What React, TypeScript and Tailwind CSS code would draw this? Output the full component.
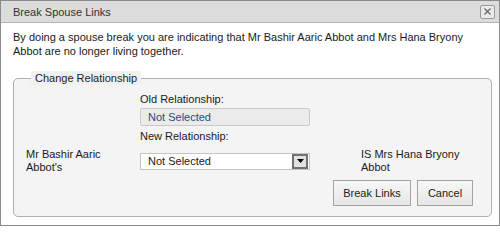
import React from "react";

export default function App() {
  const font = { fontFamily: '"Liberation Sans", Arial, sans-serif' };
  return (
    <div
      className="w-[500px] h-[226px] border border-[#8a8a8a] bg-white text-[11px] leading-[14px] text-[#1a1a1a] flex flex-col"
      style={font}
    >
      <div className="h-[22px] shrink-0 bg-[#dcdcdc] border-b border-[#b4b4b4] flex items-center justify-between pl-[12px] pr-[4px]">
        <span className="text-[#333]">Break Spouse Links</span>
        <button className="w-[15px] h-[14px] border border-[#9a9a9a] rounded-[2px] bg-[#e9e9e9] flex items-center justify-center">
          <svg width="9" height="9" viewBox="0 0 9 9">
            <path d="M1.5 1.5 L7.5 7.5 M7.5 1.5 L1.5 7.5" stroke="#6a6a6a" strokeWidth="1.3" />
          </svg>
        </button>
      </div>
      <div className="px-[12px] pt-[7px]">
        <p>
          By doing a spouse break you are indicating that Mr Bashir Aaric Abbot and Mrs Hana Bryony Abbot are no longer living together.
        </p>
        <fieldset className="mt-[13px] border border-[#b0b0b0] rounded-[5px] bg-[#f4f4f4] pl-[12px] pr-[18px] pt-[7px] pb-[10px]">
          <legend className="ml-[5px] px-[4px] bg-[#f0f0f0] text-[#222]">Change Relationship</legend>
          <div className="flex flex-col">
            <div className="pl-[114px]">Old Relationship:</div>
            <div className="ml-[114px] mt-[2px] w-[170px] h-[18px] border border-[#c9c9c9] rounded-[2px] bg-[#ebebeb] pl-[7px] flex items-center text-[#2a4a80]">
              Not Selected
            </div>
            <div className="pl-[114px] mt-[3px]">New Relationship:</div>
            <div className="flex items-center mt-[5px] leading-[13px]">
              <div className="w-[114px] pr-[10px]">Mr Bashir Aaric Abbot's</div>
              <div className="w-[170px] h-[17px] border border-[#c4c4c4] bg-white flex items-center justify-between pl-[7px] pr-[1px]">
                <span>Not Selected</span>
                <span className="w-[16px] h-[15px] border-2 border-[#707070] bg-[#e2e2e2] flex items-center justify-center">
                  <svg width="7" height="4" viewBox="0 0 7 4">
                    <path d="M0 0 L7 0 L3.5 4 Z" fill="#000" />
                  </svg>
                </span>
              </div>
              <div className="ml-[51px] w-[112px]">IS Mrs Hana Bryony Abbot</div>
            </div>
            <div className="flex justify-end gap-[6px] mt-[6px]">
              <button className="w-[78px] h-[26px] border border-[#a3a3a3] bg-gradient-to-b from-[#f7f7f7] to-[#e6e6e6] text-[#222]">
                Break Links
              </button>
              <button className="w-[56px] h-[26px] border border-[#a3a3a3] bg-gradient-to-b from-[#f7f7f7] to-[#e6e6e6] text-[#222]">
                Cancel
              </button>
            </div>
          </div>
        </fieldset>
      </div>
    </div>
  );
}
